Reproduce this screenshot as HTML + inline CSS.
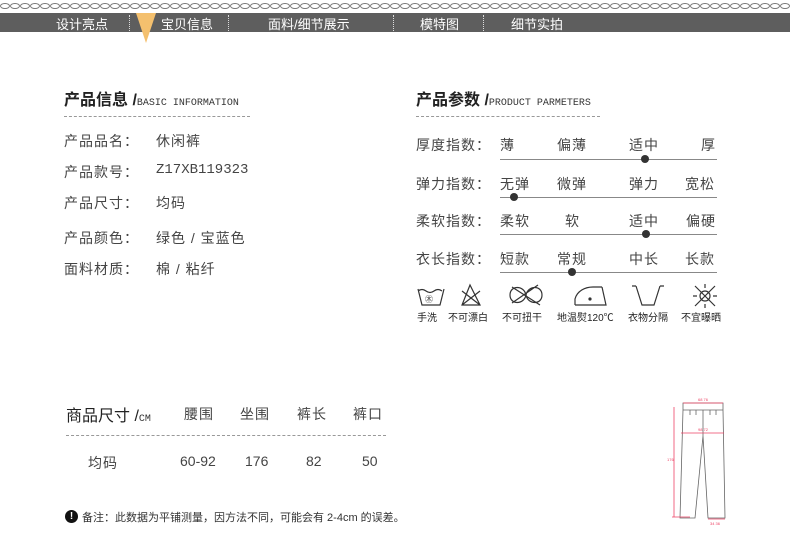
<!DOCTYPE html>
<html><head><meta charset="utf-8"><style>
body{margin:0;width:790px;height:539px;background:#fff;position:relative;overflow:hidden;font-family:"Liberation Sans","Noto Sans CJK SC",sans-serif;color:#333}
.a{position:absolute;white-space:nowrap}
.t{font-size:16px;font-weight:bold;color:#222}
.t small{font-size:10px;font-weight:normal;font-family:"Liberation Mono","Noto Sans CJK SC",monospace;color:#333}
.r{font-size:14px;color:#444;letter-spacing:1px}
.d{border-top:1px dashed #999;height:0}
.ln{height:1px;background:#888}
.dot{width:8px;height:8px;border-radius:50%;background:#333}
.ic{font-size:10px;color:#222}
.nav{font-size:13px;color:#fff}
.sep{border-left:1px dotted #ddd;height:16px;top:15px}
</style></head><body>
<svg class="a" style="left:0;top:0" width="790" height="13"><defs><pattern id="c" width="10" height="13" patternUnits="userSpaceOnUse"><ellipse cx="5" cy="6" rx="4.5" ry="2.5" fill="none" stroke="#777" stroke-width="1"/></pattern></defs><rect width="790" height="13" fill="url(#c)"/></svg>
<div class="a" style="left:0;top:13px;width:790px;height:19px;background:#5e5e5e"></div>
<div class="a nav" style="left:56px;top:14px">设计亮点</div>
<div class="a sep" style="left:129px"></div>
<svg class="a" style="left:136px;top:13px" width="20" height="30"><polygon points="0,0 20,0 10,30" fill="#f4c06e"/></svg>
<div class="a nav" style="left:161px;top:14px">宝贝信息</div>
<div class="a sep" style="left:228px"></div>
<div class="a nav" style="left:268px;top:14px">面料/细节展示</div>
<div class="a sep" style="left:393px"></div>
<div class="a nav" style="left:420px;top:14px">模特图</div>
<div class="a sep" style="left:483px"></div>
<div class="a nav" style="left:511px;top:14px">细节实拍</div>

<div class="a t" style="left:64px;top:86px">产品信息 /<small>BASIC INFORMATION</small></div>
<div class="a d" style="left:64px;top:116px;width:186px"></div>
<div class="a r" style="left:64px;top:131px">产品品名：</div><div class="a r" style="left:156px;top:131px">休闲裤</div>
<div class="a r" style="left:64px;top:162px">产品款号：</div><div class="a r" style="left:156px;top:162px;font-family:'Liberation Mono',monospace;letter-spacing:0">Z17XB119323</div>
<div class="a r" style="left:64px;top:193px">产品尺寸：</div><div class="a r" style="left:156px;top:193px">均码</div>
<div class="a r" style="left:64px;top:228px">产品颜色：</div><div class="a r" style="left:156px;top:228px">绿色 / 宝蓝色</div>
<div class="a r" style="left:64px;top:259px">面料材质：</div><div class="a r" style="left:156px;top:259px">棉 / 粘纤</div>

<div class="a t" style="left:416px;top:86px">产品参数 /<small>PRODUCT PARMETERS</small></div>
<div class="a d" style="left:416px;top:116px;width:184px"></div>

<div class="a r" style="left:416px;top:135px">厚度指数：</div>
<div class="a r" style="left:500px;top:135px">薄</div><div class="a r" style="left:557px;top:135px">偏薄</div><div class="a r" style="left:629px;top:135px">适中</div><div class="a r" style="left:701px;top:135px">厚</div>
<div class="a ln" style="left:500px;top:159px;width:217px"></div><div class="a dot" style="left:641px;top:155px"></div>

<div class="a r" style="left:416px;top:174px">弹力指数：</div>
<div class="a r" style="left:500px;top:174px">无弹</div><div class="a r" style="left:557px;top:174px">微弹</div><div class="a r" style="left:629px;top:174px">弹力</div><div class="a r" style="left:685px;top:174px">宽松</div>
<div class="a ln" style="left:500px;top:197px;width:217px"></div><div class="a dot" style="left:510px;top:193px"></div>

<div class="a r" style="left:416px;top:211px">柔软指数：</div>
<div class="a r" style="left:500px;top:211px">柔软</div><div class="a r" style="left:565px;top:211px">软</div><div class="a r" style="left:629px;top:211px">适中</div><div class="a r" style="left:686px;top:211px">偏硬</div>
<div class="a ln" style="left:500px;top:234px;width:217px"></div><div class="a dot" style="left:642px;top:230px"></div>

<div class="a r" style="left:416px;top:249px">衣长指数：</div>
<div class="a r" style="left:500px;top:249px">短款</div><div class="a r" style="left:557px;top:249px">常规</div><div class="a r" style="left:629px;top:249px">中长</div><div class="a r" style="left:685px;top:249px">长款</div>
<div class="a ln" style="left:500px;top:272px;width:217px"></div><div class="a dot" style="left:568px;top:268px"></div>

<svg class="a" style="left:410px;top:283px" width="330" height="26" fill="none" stroke="#333" stroke-width="1.2">
<path d="M8 6 L12 22 H30 L34 6 M8 8 q4 -3 8 0 q4 3 8 0 q4 -3 8 0"/><text x="15" y="19" font-size="8" fill="#333" stroke="none">㊍</text>
<path d="M60 2 L52 22 H70 Z M52 8 L70 22 M70 8 L52 22"/>
<path d="M100 12 c0 -10 14 -10 16 0 c2 10 16 10 16 0 c0 -10 -14 -10 -16 0 c-2 10 -16 10 -16 0 Z M102 4 L130 22 M102 20 L128 2"/>
<path d="M165 22 V16 c2 -8 10 -12 18 -12 L192 4 M165 22 H196 L192 4"/><circle cx="180" cy="16" r="1" fill="#333"/>
<path d="M226 3 L232 22 H244 L250 3 M222 3 L226 3 M250 3 L254 3"/>
<circle cx="295" cy="13" r="5"/><path d="M285 3 L305 23 M305 3 L285 23 M295 1 V5 M295 21 V25 M283 13 H287 M303 13 H307"/>
</svg>
<div class="a ic" style="left:417px;top:309px">手洗</div>
<div class="a ic" style="left:448px;top:309px">不可漂白</div>
<div class="a ic" style="left:502px;top:309px">不可扭干</div>
<div class="a ic" style="left:557px;top:309px">地温熨120℃</div>
<div class="a ic" style="left:628px;top:309px">衣物分隔</div>
<div class="a ic" style="left:681px;top:309px">不宜曝晒</div>

<div class="a t" style="left:66px;top:402px;font-weight:normal;color:#222">商品尺寸 /<small>CM</small></div>
<div class="a r" style="left:184px;top:404px">腰围</div><div class="a r" style="left:240px;top:404px">坐围</div><div class="a r" style="left:297px;top:404px">裤长</div><div class="a r" style="left:353px;top:404px">裤口</div>
<div class="a d" style="left:66px;top:435px;width:320px"></div>
<div class="a r" style="left:88px;top:453px">均码</div>
<div class="a r" style="left:180px;top:453px;letter-spacing:0">60-92</div><div class="a r" style="left:245px;top:453px;letter-spacing:0">176</div><div class="a r" style="left:306px;top:453px;letter-spacing:0">82</div><div class="a r" style="left:362px;top:453px;letter-spacing:0">50</div>
<div class="a" style="left:65px;top:510px;width:13px;height:13px;border-radius:50%;background:#111;color:#fff;font-size:10px;font-weight:bold;text-align:center;line-height:13px">!</div>
<div class="a" style="left:82px;top:509px;font-size:11px;color:#333">备注：此数据为平铺测量，因方法不同，可能会有 2-4cm 的误差。</div>

<svg class="a" style="left:660px;top:396px" width="80" height="130" fill="none" stroke-width="0.8">
<path d="M23 7 H63 V14 H23 Z M23 14 L20 122 H35 L43 40 L48 122 H65 L63 14 M43 14 V40 M30 14 V19 M36 14 V19 M50 14 V19 M56 14 V19" stroke="#666"/>
<path d="M23 7 H63 M21 37 H64 M14 11 V121 M12 121 H30 M48 123 H65" stroke="#e46"/>
<text x="38" y="5" font-size="4" fill="#e46">68 76</text><text x="38" y="35" font-size="4" fill="#e46">98 72</text><text x="7" y="65" font-size="4" fill="#e46">176</text><text x="50" y="129" font-size="4" fill="#e46">34 36</text>
</svg>
</body></html>
